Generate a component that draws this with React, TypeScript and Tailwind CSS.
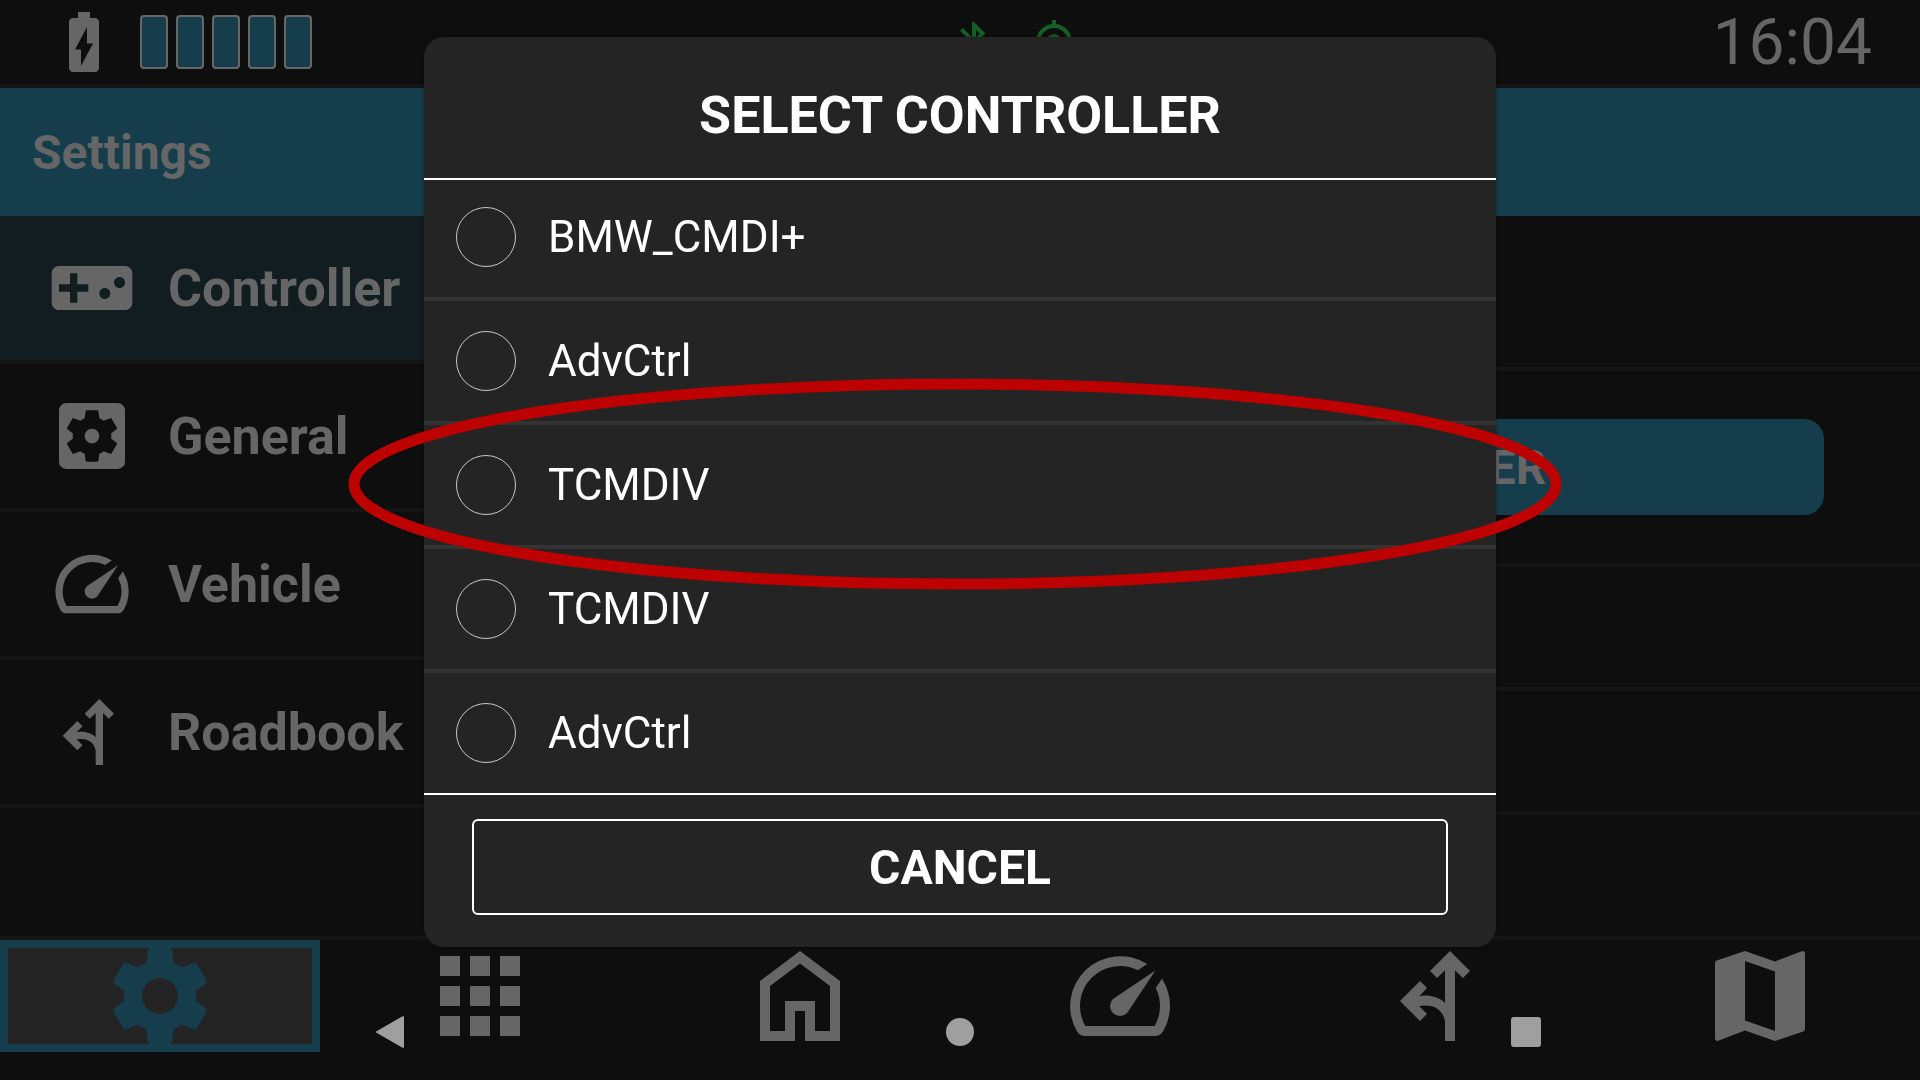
import { useState } from 'react';
import type { IconType } from 'react-icons';
import {
  MdApps,
  MdBatteryChargingFull,
  MdBluetooth,
  MdGpsFixed,
  MdMap,
  MdSettings,
  MdSettingsApplications,
  MdSpeed,
  MdVideogameAsset,
} from 'react-icons/md';

interface IconProps {
  className?: string;
}

function ForkIcon({ className = '' }: IconProps) {
  return (
    <svg className={className} viewBox="0 0 24 24" fill="currentColor" aria-hidden="true">
      <path d="M14 3l-4 4 1.41 1.41L13 6.83v6.57C11.6 12 9.4 11.7 7.83 12.03L9.41 10.41 8 9l-4 4 4 4 1.41-1.41L7.83 14C10.6 13.5 12.5 14.6 13 17v4h2V6.83l1.59 1.58L18 7z" />
    </svg>
  );
}

function HomeIcon({ className = '' }: IconProps) {
  return (
    <svg className={className} viewBox="0 0 24 24" fill="currentColor" aria-hidden="true">
      <path
        fillRule="evenodd"
        d="M12 3L4 9v12h7v-6h2v6h7V9zM6 19h3v-6h6v6h3v-9l-6-4.5L6 10z"
      />
    </svg>
  );
}

type Icon = IconType | typeof ForkIcon;

const menu: { label: string; icon: Icon }[] = [
  { label: 'Controller', icon: MdVideogameAsset },
  { label: 'General', icon: MdSettingsApplications },
  { label: 'Vehicle', icon: MdSpeed },
  { label: 'Roadbook', icon: ForkIcon },
];

const tabs: { label: string; icon: Icon }[] = [
  { label: 'Settings', icon: MdSettings },
  { label: 'Apps', icon: MdApps },
  { label: 'Home', icon: HomeIcon },
  { label: 'Vehicle', icon: MdSpeed },
  { label: 'Roadbook', icon: ForkIcon },
  { label: 'Map', icon: MdMap },
];

const controllers = ['BMW_CMDI+', 'AdvCtrl', 'TCMDIV', 'TCMDIV', 'AdvCtrl'];
const highlighted = 2;

function StatusBar() {
  return (
    <header className="grid grid-cols-3 items-center h-[88px] border-b-4 border-[#151515] px-12">
      <div className="flex items-center gap-5">
        <MdBatteryChargingFull className="size-[72px]" />
        <div className="flex gap-2">
          {[1, 2, 3, 4, 5].map((bar) => (
            <span key={bar} className="w-7 h-[54px] rounded-sm border-2 border-[#666] bg-[#163d4b]" />
          ))}
        </div>
      </div>
      <div className="flex justify-center gap-8 pl-27 text-[#145f26]">
        <MdBluetooth className="size-12" />
        <MdGpsFixed className="size-12" />
      </div>
      <time className="pt-0.5 text-right text-[64px] leading-none">16:04</time>
    </header>
  );
}

function Sidebar() {
  return (
    <nav className="w-[36%] shrink-0">
      {menu.map(({ label, icon: Icon }, i) => (
        <a
          key={label}
          href="#"
          className={`flex items-center gap-8 h-[148px] border-b-4 border-[#151515] pl-12 text-[52px] font-bold ${i === 0 ? 'bg-[#111d21]' : ''}`}
        >
          <Icon className="size-[88px]" />
          <span className="pt-0.5">{label}</span>
        </a>
      ))}
    </nav>
  );
}

function TabBar() {
  return (
    <nav className="grid grid-cols-6 h-[140px] pb-7">
      {tabs.map(({ label, icon: Icon }, i) => (
        <a
          key={label}
          href="#"
          aria-label={label}
          className={`flex items-center justify-center h-28 ${i === 0 ? 'border-8 border-[#163d4b] bg-[#242424] text-[#163d4b]' : ''}`}
        >
          <Icon className="size-[120px] shrink-0" />
        </a>
      ))}
    </nav>
  );
}

function SystemBar() {
  return (
    <div className="fixed inset-x-0 bottom-0 flex justify-center gap-[472px] h-24 text-[#9f9f9f]">
      <button type="button" aria-label="Back" className="size-24">
        <svg viewBox="0 0 96 96" fill="currentColor" stroke="currentColor" strokeWidth="2" strokeLinejoin="round">
          <path d="M33 48l26-15v30z" />
        </svg>
      </button>
      <button type="button" aria-label="Home" className="size-24">
        <svg viewBox="0 0 96 96" fill="currentColor">
          <circle cx="48" cy="48" r="14" />
        </svg>
      </button>
      <button type="button" aria-label="Overview" className="size-24">
        <svg viewBox="0 0 96 96" fill="currentColor">
          <rect x="31" y="33" width="30" height="30" rx="3" />
        </svg>
      </button>
    </div>
  );
}

function ControllerDialog() {
  const [selected, setSelected] = useState<number | null>(null);

  return (
    <div className="fixed inset-0 flex items-center justify-center pb-24">
      <div
        role="dialog"
        aria-labelledby="dialog-title"
        className="w-full max-w-[1072px] rounded-[20px] bg-[#242424] text-white shadow-[0_0_4px_rgba(0,0,0,0.4)]"
      >
        <h2
          id="dialog-title"
          className="flex items-center justify-center h-[143px] border-b-2 border-white pt-4 text-[52px] leading-none font-bold"
        >
          SELECT CONTROLLER
        </h2>

        {/* List slides slightly under the title rule */}
        <ul className="-mt-[3px] divide-y-4 divide-[#333]">
          {controllers.map((name, i) => (
            <li key={i} className="relative">
              <label className="flex items-center gap-8 h-[120px] pl-8 text-[44px]">
                <input
                  type="radio"
                  name="controller"
                  checked={selected === i}
                  onChange={() => setSelected(i)}
                  className="appearance-none size-[60px] rounded-full border border-[#c8c8c8] checked:bg-[#163d4b]"
                />
                {name}
              </label>
              {i === highlighted && (
                <svg
                  viewBox="0 0 1214 212"
                  className="absolute z-10 -left-[76px] -top-[47px] w-[1214px] h-[212px] max-w-none pointer-events-none"
                  aria-hidden="true"
                >
                  <ellipse cx="607" cy="106" rx="601" ry="100" fill="none" stroke="#bd0000" strokeWidth="11" />
                </svg>
              )}
            </li>
          ))}
        </ul>

        <div className="border-t-2 border-white px-12 pt-6 pb-8">
          <button type="button" className="w-full h-24 rounded-md border-2 border-white pt-0.5 text-[48px] leading-none font-bold">
            CANCEL
          </button>
        </div>
      </div>
    </div>
  );
}

export default function App() {
  return (
    <div className="flex flex-col min-h-screen bg-[#0e0e0e] font-[Roboto,sans-serif] text-[#666]">
      <StatusBar />
      <h1 className="flex items-center h-32 bg-[#163d4b] px-8 pt-0.5 text-[48px] font-bold">Settings</h1>

      <main className="flex flex-1 border-b-4 border-[#151515]">
        <Sidebar />
        <section className="flex-1">
          <div className="h-[155px] border-b-4 border-[#151515]" />
          <div className="border-b-4 border-[#151515] px-24 py-12">
            <button type="button" className="w-full h-24 rounded-[20px] bg-[#163d4b] pt-0.5 text-[48px] leading-none font-bold">
              SELECT CONTROLLER
            </button>
          </div>
          <div className="h-31 border-b-4 border-[#151515]" />
          <div className="h-31 border-b-4 border-[#151515]" />
        </section>
      </main>

      <TabBar />
      <ControllerDialog />
      <SystemBar />
    </div>
  );
}
